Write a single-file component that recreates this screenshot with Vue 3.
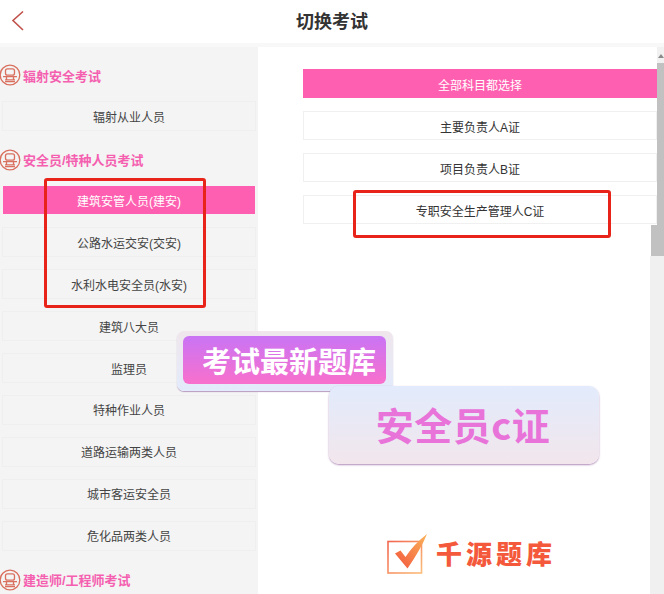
<template>
  <div class="page">
    <header class="topbar">
      <svg class="back" width="14" height="22" viewBox="0 0 14 22">
        <path d="M12 1.5 L2 10.5 L12 20" fill="none" stroke="#c0504a" stroke-width="1.6" />
      </svg>
      <h1 class="title">切换考试</h1>
    </header>
    <div class="strip"></div>

    <div class="panels">
      <aside class="left">
        <template v-for="group in groups" :key="group.name">
          <div class="group-title">
            <svg class="group-icon" width="22" height="22" viewBox="0 0 22 22">
              <circle cx="11" cy="11" r="9.8" fill="none" stroke="#d9705f" stroke-width="1.3" />
              <rect x="6.5" y="4.8" width="9" height="6.4" rx="2" fill="none" stroke="#d9705f" stroke-width="1.3" />
              <path d="M4 12.6 H18 M7.5 12.6 V15.4 M14.5 12.6 V15.4 M6 15.8 H16 M6 17.6 H16" fill="none" stroke="#d9705f" stroke-width="1.3" />
            </svg>
            <span>{{ group.name }}</span>
          </div>
          <div
            v-for="item in group.items"
            :key="item"
            class="left-item"
            :class="{ active: item === activeLeft }"
          >{{ item }}</div>
        </template>
      </aside>

      <main class="right">
        <div class="right-list">
          <div class="right-item all">全部科目都选择</div>
          <div v-for="item in subjects" :key="item" class="right-item">{{ item }}</div>
        </div>
        <div class="scrollbar">
          <div class="arrow"></div>
          <div class="thumb"></div>
          <div class="thumb-wide"></div>
        </div>
        <div class="track"></div>
      </main>
    </div>

    <!-- 标注框和宣传贴片盖在截图上面 -->
    <div class="mark mark-left"></div>
    <div class="mark mark-right"></div>

    <div class="badge-latest">
      <div class="badge-latest-inner">考试最新题库</div>
    </div>
    <div class="badge-cert">安全员c证</div>

    <div class="logo">
      <svg width="42" height="42" viewBox="0 0 42 42">
        <defs>
          <linearGradient id="boxGrad" x1="0" y1="0" x2="1" y2="1">
            <stop offset="0" stop-color="#f2664f" />
            <stop offset="1" stop-color="#fbbd7a" />
          </linearGradient>
          <linearGradient id="tickGrad" x1="0" y1="1" x2="1" y2="0">
            <stop offset="0" stop-color="#f2553c" />
            <stop offset="1" stop-color="#fbb45a" />
          </linearGradient>
        </defs>
        <rect x="1" y="8.5" width="33.5" height="31.5" fill="none" stroke="url(#boxGrad)" stroke-width="1.6" />
        <path d="M8 20.5 L13.5 17.5 L18.5 24 Q27 11 40 1 Q34 16 20.5 35.5 Z" fill="url(#tickGrad)" />
      </svg>
      <span class="logo-text">千源题库</span>
    </div>
  </div>
</template>

<script setup>
const activeLeft = '建筑安管人员(建安)'

const groups = [
  { name: '辐射安全考试', items: ['辐射从业人员'] },
  {
    name: '安全员/特种人员考试',
    items: [
      '建筑安管人员(建安)',
      '公路水运交安(交安)',
      '水利水电安全员(水安)',
      '建筑八大员',
      '监理员',
      '特种作业人员',
      '道路运输两类人员',
      '城市客运安全员',
      '危化品两类人员'
    ]
  },
  { name: '建造师/工程师考试', items: [] }
]

const subjects = ['主要负责人A证', '项目负责人B证', '专职安全生产管理人C证']
</script>

<style>
html, body {
  margin: 0;
  background: #fff;
}
</style>

<style scoped>
.page {
  position: relative;
  width: 664px;
  height: 594px;
  overflow: hidden;
  background: #fff;
  font-family: "Liberation Sans", "Noto Sans CJK SC", sans-serif;
}

.topbar {
  position: relative;
  height: 43px;
  box-sizing: border-box;
  padding-bottom: 3px;
  display: flex;
  align-items: center;
  justify-content: center;
}
.back {
  position: absolute;
  left: 11px;
  top: 10px;
}
.title {
  margin: 0;
  font-size: 18px;
  font-weight: 700;
  color: #333;
}
.strip {
  height: 4px;
  background: #f8f8f8;
}

.panels {
  display: flex;
  height: 547px;
}
.left {
  width: 258px;
  flex: none;
  display: flex;
  flex-direction: column;
  box-sizing: border-box;
  padding: 11px 2px 0;
  background: #f4f4f4;
}
.group-title {
  flex: none;
  height: 30px;
  margin: 2px 0 11px -3px;
  display: flex;
  align-items: center;
  gap: 2px;
  font-size: 13px;
  font-weight: 700;
  color: #f45fb0;
}
.group-icon {
  flex: none;
}
.left-item {
  flex: none;
  height: 30px;
  margin-bottom: 11.9px;
  box-sizing: border-box;
  border: 1px solid #efefef;
  display: flex;
  align-items: center;
  justify-content: center;
  font-size: 12px;
  color: #444;
}
.left-item.active {
  height: 28.5px;
  margin: 0 1px 13px;
  padding-top: 1px;
  border: none;
  background: #ff5fb0;
  color: #fff;
}

.right {
  flex: 1;
  position: relative;
}
.right-list {
  padding: 22px 7px 0 45px;
}
.right-item {
  height: 29px;
  margin-bottom: 13px;
  padding-top: 2px;
  box-sizing: border-box;
  border: 1px solid #f0f0f0;
  display: flex;
  align-items: center;
  justify-content: center;
  font-size: 12px;
  color: #333;
}
.right-item.all {
  border: none;
  background: #ff5fb0;
  color: #fff;
}
.scrollbar {
  position: absolute;
  right: 0;
  top: 0;
  width: 7px;
  height: 209px;
  background: #f1f1f1;
}
.track {
  position: absolute;
  right: 0;
  top: 209px;
  bottom: 0;
  width: 14px;
  background: #f0f0f0;
}
.arrow {
  width: 0;
  height: 0;
  margin: 7px 0 0 1px;
  border: 3px solid transparent;
  border-top: 0;
  border-bottom: 4px solid #8a8a8a;
}
.thumb {
  position: absolute;
  top: 16px;
  left: 0;
  width: 7px;
  height: 193px;
  background: #c1c1c1;
}
.thumb-wide {
  position: absolute;
  top: 178px;
  right: 0;
  width: 13px;
  height: 31px;
  background: #c1c1c1;
}

.mark {
  position: absolute;
  box-sizing: border-box;
  border: 3px solid #e8231a;
  border-radius: 3px;
}
.mark-left {
  left: 44px;
  top: 178px;
  width: 162px;
  height: 130px;
}
.mark-right {
  left: 353px;
  top: 190px;
  width: 258px;
  height: 48px;
}

.badge-latest {
  position: absolute;
  left: 177px;
  top: 331px;
  width: 216px;
  height: 60px;
  box-sizing: border-box;
  padding: 5px 7px 7px 6px;
  border-radius: 7px;
  background: linear-gradient(#f0e6ec, #e2ebfb);
  box-shadow: 0 1px 1px #b79cc0;
}
.badge-latest-inner {
  height: 100%;
  border-radius: 6px;
  background: linear-gradient(#c974f5, #f970cc);
  display: flex;
  align-items: center;
  justify-content: flex-end;
  padding-right: 10px;
  box-sizing: border-box;
  font-family: "Noto Sans CJK SC", sans-serif;
  font-size: 29px;
  font-weight: 700;
  color: #fff;
}
.badge-cert {
  position: absolute;
  left: 329px;
  top: 386px;
  width: 270px;
  height: 78px;
  box-sizing: border-box;
  padding: 0 2px 3px 0;
  border-radius: 10px;
  background: linear-gradient(#e2ebfc, #f2e6ec);
  box-shadow: 0 1px 2px #b08cb8;
  display: flex;
  align-items: center;
  justify-content: center;
  font-family: "Noto Sans CJK SC", sans-serif;
  font-size: 38px;
  font-weight: 700;
  letter-spacing: 0.5px;
  color: #e874da;
}

.logo {
  position: absolute;
  left: 387px;
  top: 533px;
  display: flex;
  align-items: flex-start;
  gap: 7px;
}
.logo-text {
  font-size: 26px;
  line-height: 44px;
  font-weight: 900;
  letter-spacing: 4px;
  color: #f4593c;
}
</style>
